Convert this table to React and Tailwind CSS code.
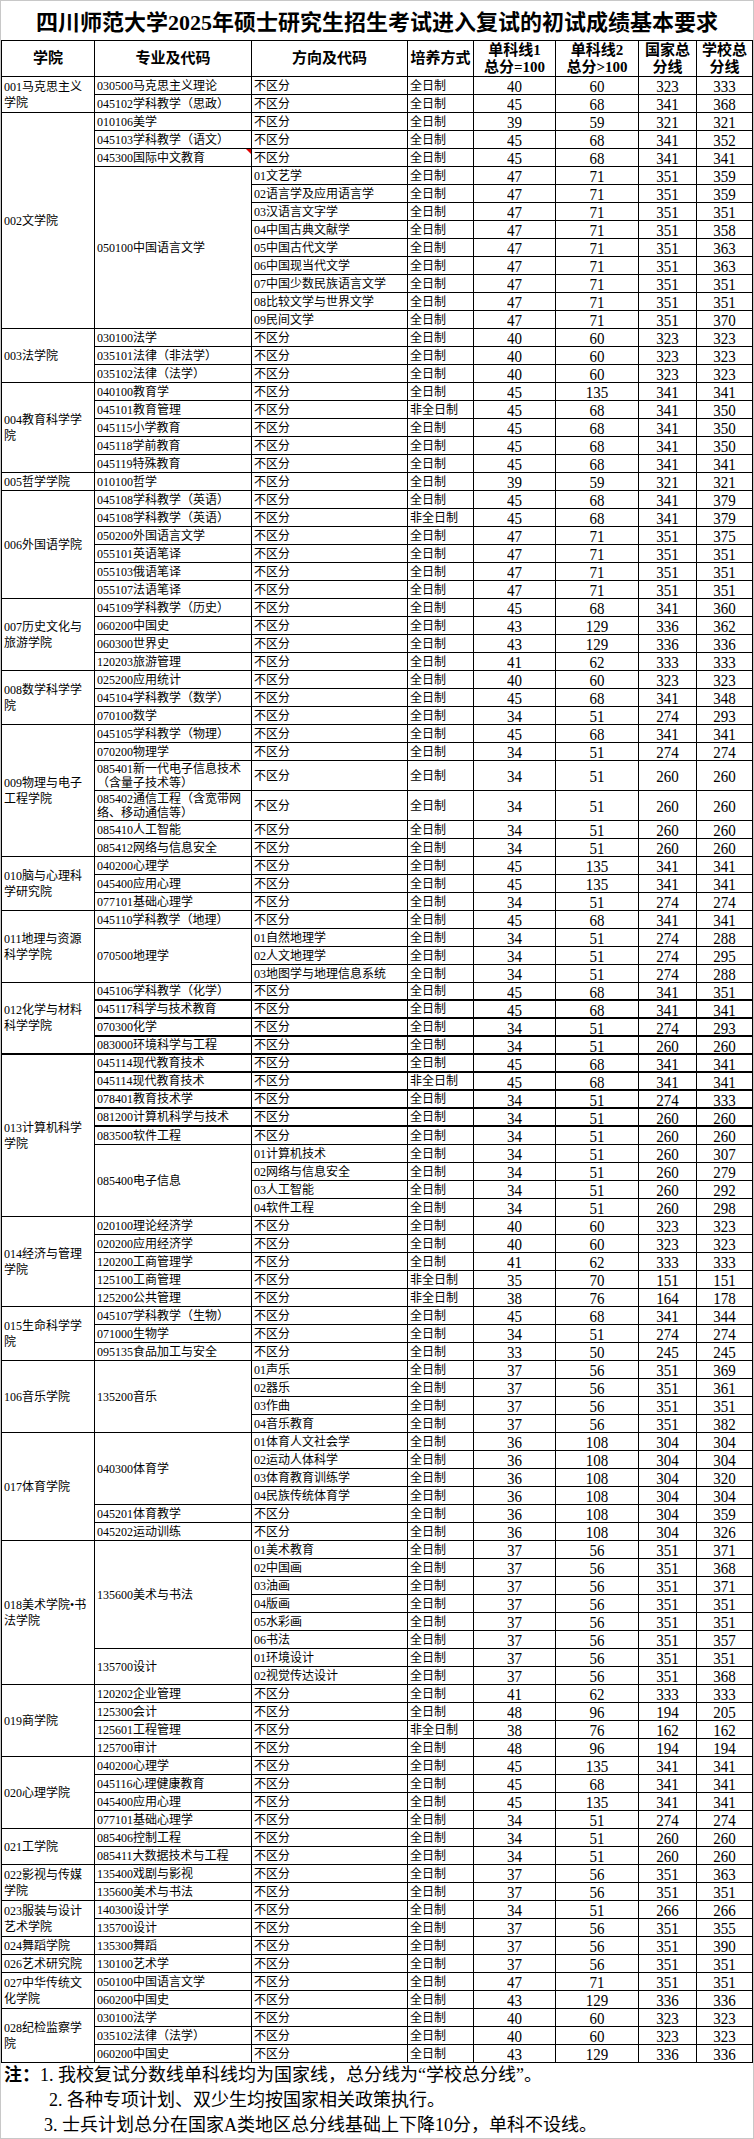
import React from 'react';

const F = '全日制';
const P = '非全日制';
const N = '不区分';

// single-direction major
const s = (major, mode, a, b, c, d) => [major, [[N, mode, a, b, c, d]]];

const groups = [
  { name: '001马克思主义学院', majors: [
    s('030500马克思主义理论', F, 40, 60, 323, 333),
    s('045102学科教学（思政）', F, 45, 68, 341, 368),
  ] },
  { name: '002文学院', majors: [
    s('010106美学', F, 39, 59, 321, 321),
    s('045103学科教学（语文）', F, 45, 68, 341, 352),
    s('045300国际中文教育', F, 45, 68, 341, 341),
    ['050100中国语言文学', [
      ['01文艺学', F, 47, 71, 351, 359],
      ['02语言学及应用语言学', F, 47, 71, 351, 359],
      ['03汉语言文字学', F, 47, 71, 351, 351],
      ['04中国古典文献学', F, 47, 71, 351, 358],
      ['05中国古代文学', F, 47, 71, 351, 363],
      ['06中国现当代文学', F, 47, 71, 351, 363],
      ['07中国少数民族语言文学', F, 47, 71, 351, 351],
      ['08比较文学与世界文学', F, 47, 71, 351, 351],
      ['09民间文学', F, 47, 71, 351, 370],
    ]],
  ] },
  { name: '003法学院', majors: [
    s('030100法学', F, 40, 60, 323, 323),
    s('035101法律（非法学）', F, 40, 60, 323, 323),
    s('035102法律（法学）', F, 40, 60, 323, 323),
  ] },
  { name: '004教育科学学院', majors: [
    s('040100教育学', F, 45, 135, 341, 341),
    s('045101教育管理', P, 45, 68, 341, 350),
    s('045115小学教育', F, 45, 68, 341, 350),
    s('045118学前教育', F, 45, 68, 341, 350),
    s('045119特殊教育', F, 45, 68, 341, 341),
  ] },
  { name: '005哲学学院', majors: [
    s('010100哲学', F, 39, 59, 321, 321),
  ] },
  { name: '006外国语学院', majors: [
    s('045108学科教学（英语）', F, 45, 68, 341, 379),
    s('045108学科教学（英语）', P, 45, 68, 341, 379),
    s('050200外国语言文学', F, 47, 71, 351, 375),
    s('055101英语笔译', F, 47, 71, 351, 351),
    s('055103俄语笔译', F, 47, 71, 351, 351),
    s('055107法语笔译', F, 47, 71, 351, 351),
  ] },
  { name: '007历史文化与旅游学院', majors: [
    s('045109学科教学（历史）', F, 45, 68, 341, 360),
    s('060200中国史', F, 43, 129, 336, 362),
    s('060300世界史', F, 43, 129, 336, 336),
    s('120203旅游管理', F, 41, 62, 333, 333),
  ] },
  { name: '008数学科学学院', majors: [
    s('025200应用统计', F, 40, 60, 323, 323),
    s('045104学科教学（数学）', F, 45, 68, 341, 348),
    s('070100数学', F, 34, 51, 274, 293),
  ] },
  { name: '009物理与电子工程学院', majors: [
    s('045105学科教学（物理）', F, 45, 68, 341, 341),
    s('070200物理学', F, 34, 51, 274, 274),
    s('085401新一代电子信息技术\n（含量子技术等）', F, 34, 51, 260, 260),
    s('085402通信工程（含宽带网\n络、移动通信等）', F, 34, 51, 260, 260),
    s('085410人工智能', F, 34, 51, 260, 260),
    s('085412网络与信息安全', F, 34, 51, 260, 260),
  ] },
  { name: '010脑与心理科学研究院', majors: [
    s('040200心理学', F, 45, 135, 341, 341),
    s('045400应用心理', F, 45, 135, 341, 341),
    s('077101基础心理学', F, 34, 51, 274, 274),
  ] },
  { name: '011地理与资源科学学院', majors: [
    s('045110学科教学（地理）', F, 45, 68, 341, 341),
    ['070500地理学', [
      ['01自然地理学', F, 34, 51, 274, 288],
      ['02人文地理学', F, 34, 51, 274, 295],
      ['03地图学与地理信息系统', F, 34, 51, 274, 288],
    ]],
  ] },
  { name: '012化学与材料科学学院', majors: [
    s('045106学科教学（化学）', F, 45, 68, 341, 351),
    s('045117科学与技术教育', F, 45, 68, 341, 341),
    s('070300化学', F, 34, 51, 274, 293),
    s('083000环境科学与工程', F, 34, 51, 260, 260),
  ] },
  { name: '013计算机科学学院', majors: [
    s('045114现代教育技术', F, 45, 68, 341, 341),
    s('045114现代教育技术', P, 45, 68, 341, 341),
    s('078401教育技术学', F, 34, 51, 274, 333),
    s('081200计算机科学与技术', F, 34, 51, 260, 260),
    s('083500软件工程', F, 34, 51, 260, 260),
    ['085400电子信息', [
      ['01计算机技术', F, 34, 51, 260, 307],
      ['02网络与信息安全', F, 34, 51, 260, 279],
      ['03人工智能', F, 34, 51, 260, 292],
      ['04软件工程', F, 34, 51, 260, 298],
    ]],
  ] },
  { name: '014经济与管理学院', majors: [
    s('020100理论经济学', F, 40, 60, 323, 323),
    s('020200应用经济学', F, 40, 60, 323, 323),
    s('120200工商管理学', F, 41, 62, 333, 333),
    s('125100工商管理', P, 35, 70, 151, 151),
    s('125200公共管理', P, 38, 76, 164, 178),
  ] },
  { name: '015生命科学学院', majors: [
    s('045107学科教学（生物）', F, 45, 68, 341, 344),
    s('071000生物学', F, 34, 51, 274, 274),
    s('095135食品加工与安全', F, 33, 50, 245, 245),
  ] },
  { name: '106音乐学院', majors: [
    ['135200音乐', [
      ['01声乐', F, 37, 56, 351, 369],
      ['02器乐', F, 37, 56, 351, 361],
      ['03作曲', F, 37, 56, 351, 351],
      ['04音乐教育', F, 37, 56, 351, 382],
    ]],
  ] },
  { name: '017体育学院', majors: [
    ['040300体育学', [
      ['01体育人文社会学', F, 36, 108, 304, 304],
      ['02运动人体科学', F, 36, 108, 304, 304],
      ['03体育教育训练学', F, 36, 108, 304, 320],
      ['04民族传统体育学', F, 36, 108, 304, 304],
    ]],
    s('045201体育教学', F, 36, 108, 304, 359),
    s('045202运动训练', F, 36, 108, 304, 326),
  ] },
  { name: '018美术学院•书法学院', majors: [
    ['135600美术与书法', [
      ['01美术教育', F, 37, 56, 351, 371],
      ['02中国画', F, 37, 56, 351, 368],
      ['03油画', F, 37, 56, 351, 371],
      ['04版画', F, 37, 56, 351, 351],
      ['05水彩画', F, 37, 56, 351, 351],
      ['06书法', F, 37, 56, 351, 357],
    ]],
    ['135700设计', [
      ['01环境设计', F, 37, 56, 351, 351],
      ['02视觉传达设计', F, 37, 56, 351, 368],
    ]],
  ] },
  { name: '019商学院', majors: [
    s('120202企业管理', F, 41, 62, 333, 333),
    s('125300会计', F, 48, 96, 194, 205),
    s('125601工程管理', P, 38, 76, 162, 162),
    s('125700审计', F, 48, 96, 194, 194),
  ] },
  { name: '020心理学院', majors: [
    s('040200心理学', F, 45, 135, 341, 341),
    s('045116心理健康教育', F, 45, 68, 341, 341),
    s('045400应用心理', F, 45, 135, 341, 341),
    s('077101基础心理学', F, 34, 51, 274, 274),
  ] },
  { name: '021工学院', majors: [
    s('085406控制工程', F, 34, 51, 260, 260),
    s('085411大数据技术与工程', F, 34, 51, 260, 260),
  ] },
  { name: '022影视与传媒学院', majors: [
    s('135400戏剧与影视', F, 37, 56, 351, 363),
    s('135600美术与书法', F, 37, 56, 351, 351),
  ] },
  { name: '023服装与设计艺术学院', majors: [
    s('140300设计学', F, 34, 51, 266, 266),
    s('135700设计', F, 37, 56, 351, 355),
  ] },
  { name: '024舞蹈学院', majors: [
    s('135300舞蹈', F, 37, 56, 351, 390),
  ] },
  { name: '026艺术研究院', majors: [
    s('130100艺术学', F, 37, 56, 351, 351),
  ] },
  { name: '027中华传统文化学院', majors: [
    s('050100中国语言文学', F, 47, 71, 351, 351),
    s('060200中国史', F, 43, 129, 336, 336),
  ] },
  { name: '028纪检监察学院', majors: [
    s('030100法学', F, 40, 60, 323, 323),
    s('035102法律（法学）', F, 40, 60, 323, 323),
    s('060200中国史', F, 43, 129, 336, 336),
  ] },
];

const spanCls = {
  1: 'row-span-1', 2: 'row-span-2', 3: 'row-span-3', 4: 'row-span-4',
  5: 'row-span-5', 6: 'row-span-6', 7: 'row-span-7', 8: 'row-span-8',
  9: 'row-span-9', 10: 'row-span-10', 11: 'row-span-11', 12: 'row-span-12',
};

// rows whose bottom line is drawn heavier in the sheet
const isThick = (r) => r >= 49 && r <= 56;

const headers = [
  ['学院'], ['专业及代码'], ['方向及代码'], ['培养方式'],
  ['单科线1', '总分=100'], ['单科线2', '总分>100'], ['国家总', '分线'], ['学校总', '分线'],
];

const buildCells = () => {
  const cells = [];
  let r = 0;
  groups.forEach((g, gi) => {
    const count = g.majors.reduce((n, m) => n + m[1].length, 0);
    const gLast = r + count - 1;
    cells.push(
      <div
        key={`g${gi}`}
        className={`${spanCls[count]} border-r ${isThick(gLast) ? 'border-b-2' : 'border-b'} border-black flex items-center px-[2px] text-[12px] leading-[16px]`}
      >
        {g.name}
      </div>
    );
    g.majors.forEach((m, mi) => {
      const [major, dirs] = m;
      const mLast = r + dirs.length - 1;
      cells.push(
        <div
          key={`m${gi}-${mi}`}
          className={`${spanCls[dirs.length]} relative border-r ${isThick(mLast) ? 'border-b-2' : 'border-b'} border-black flex items-center px-[2px] text-[12px] leading-[14px] whitespace-pre-line`}
        >
          {major}
          {major.startsWith('045300') && (
            <span className="absolute right-0 top-0 w-0 h-0 border-l-[5px] border-l-transparent border-t-[5px] border-t-[#e00000]" />
          )}
        </div>
      );
      dirs.forEach((d, di) => {
        const bb = isThick(r) ? 'border-b-2' : 'border-b';
        const [dir, mode, ...nums] = d;
        cells.push(
          <div key={`d${r}`} className={`${bb} border-r border-black flex items-center px-[2px] text-[12px] leading-[14px]`}>
            {dir}
          </div>
        );
        cells.push(
          <div key={`f${r}`} className={`${bb} border-r border-black flex items-center px-[2px] text-[12px] leading-[14px]`}>
            {mode}
          </div>
        );
        nums.forEach((v, ni) => {
          cells.push(
            <div key={`n${r}-${ni}`} className={`${bb} border-r border-black flex items-center justify-center pt-[2px] text-[15px] leading-[15px]`}>
              <span className="inline-block scale-y-[1.15]">{v}</span>
            </div>
          );
        });
        r++;
      });
    });
  });
  return cells;
};

export default function App() {
  return (
    <div className="w-[754px] bg-white text-black border border-[#c8c8c8] font-['Liberation_Serif','Noto_Sans_CJK_SC',serif]">
      <div className="h-[39px] flex items-center justify-center pt-[3px] text-[22px] font-bold">
        四川师范大学2025年硕士研究生招生考试进入复试的初试成绩基本要求
      </div>

      <div className="grid grid-cols-[93px_157px_156px_66px_82px_83px_58px_56px] grid-rows-[36px_repeat(38,18px)_30px_30px_repeat(69,18px)] border-l border-t border-black">
        {headers.map((h, i) => (
          <div key={`h${i}`} className="border-r border-b border-black flex flex-col items-center justify-center text-[15px] leading-[17px] font-bold">
            {h.map((line) => (
              <span key={line}>{line}</span>
            ))}
          </div>
        ))}
        {buildCells()}
      </div>

      <div className="h-[75px] text-[18px] leading-[25px]">
        <div className="pl-[3px]">
          <span className="font-bold">注：</span>1. 我校复试分数线单科线均为国家线，总分线为“学校总分线”。
        </div>
        <div className="pl-[48px]">2. 各种专项计划、双少生均按国家相关政策执行。</div>
        <div className="pl-[43px]">3. 士兵计划总分在国家A类地区总分线基础上下降10分，单科不设线。</div>
      </div>
    </div>
  );
}
